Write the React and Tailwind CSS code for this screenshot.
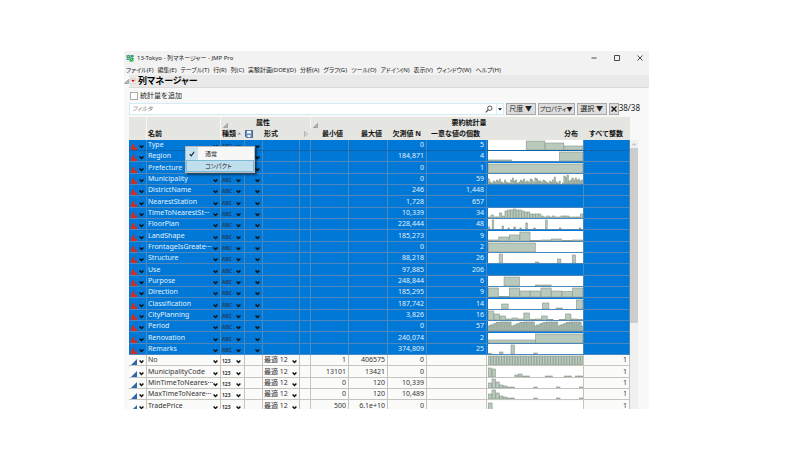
import React, { useState } from "react";

const menus = [
  "ファイル(F)",
  "編集(E)",
  "テーブル(T)",
  "行(R)",
  "列(C)",
  "実験計画(DOE)(D)",
  "分析(A)",
  "グラフ(G)",
  "ツール(O)",
  "アドイン(N)",
  "表示(V)",
  "ウィンドウ(W)",
  "ヘルプ(H)",
];

// puts single bars into an otherwise empty histogram
const sparse = (count, bars) => Array.from({ length: count }, (_, i) => bars[i] || 0);

const period = Array.from({ length: 57 }, (_, i) => Math.min(9, 5 + (i % 14) * 0.6 + (i % 2) * 0.4));

const columns = [
  { name: "Type", missing: "0", unique: "5", bars: [0, 0, 9, 7, 4] },
  { name: "Region", missing: "184,871", unique: "4", bars: [1, 0, 0, 9] },
  { name: "Prefecture", missing: "0", unique: "1", bars: [9] },
  {
    name: "Municipality",
    missing: "0",
    unique: "59",
    bars: [5, 2, 1, 3, 2, 4, 3, 5, 2, 1, 4, 2, 1, 1, 4, 6, 3, 4, 1, 2, 4, 3, 5, 2, 3, 2, 5, 4, 2, 6, 5, 3, 3, 2, 4, 3, 2, 1, 3, 2, 4, 7, 2, 1, 3, 0, 1, 8, 7, 9, 3, 4, 6, 4, 6, 4, 5, 3, 4],
  },
  { name: "DistrictName", missing: "246", unique: "1,448" },
  { name: "NearestStation", missing: "1,728", unique: "657" },
  {
    name: "TimeToNearestSt···",
    missing: "10,339",
    unique: "34",
    bars: [1, 3, 1, 1, 5, 2, 7, 8, 8, 9, 8, 8, 7, 6, 6, 4, 4, 4, 4, 2, 1, 2, 1, 2, 1, 1, 2, 2, 2, 1, 1, 1, 1, 4],
  },
  {
    name: "FloorPlan",
    missing: "228,444",
    unique: "48",
    bars: sparse(48, { 0: 2, 2: 9, 7: 3, 10: 1, 13: 2, 16: 1, 19: 6, 23: 1, 29: 9, 36: 1, 46: 1 }),
  },
  { name: "LandShape", missing: "185,273", unique: "9", bars: [1, 4, 6, 9, 0.5, 1, 2, 0.5, 1] },
  { name: "FrontageIsGreate···", missing: "0", unique: "2", bars: [9, 0] },
  { name: "Structure", missing: "88,218", unique: "26", bars: sparse(26, { 3: 9, 13: 1, 19: 4, 23: 8 }) },
  { name: "Use", missing: "97,885", unique: "206" },
  { name: "Purpose", missing: "248,844", unique: "6", bars: [0, 9, 0, 1, 0, 0] },
  { name: "Direction", missing: "185,295", unique: "9", bars: [9, 0.5, 9, 6, 6, 9, 6, 5.5, 9] },
  { name: "Classification", missing: "187,742", unique: "14", bars: sparse(14, { 2: 5, 8: 6, 10: 1, 13: 9 }) },
  {
    name: "CityPlanning",
    missing: "3,826",
    unique: "16",
    bars: [9, 6, 4, 1, 2, 1, 7, 0.5, 1, 4, 0.5, 0, 0.5, 6, 1, 0.5],
  },
  { name: "Period", missing: "0", unique: "57", bars: period },
  { name: "Renovation", missing: "240,074", unique: "2", bars: [3, 9] },
  { name: "Remarks", missing: "374,809", unique: "25", bars: sparse(25, { 0: 0.5, 3: 2, 6: 9, 12: 1 }) },
  { name: "No", numeric: true, min: "1", max: "406575", missing: "0", bars: Array(35).fill(9) },
  {
    name: "MunicipalityCode",
    numeric: true,
    min: "13101",
    max: "13421",
    missing: "0",
    bars: sparse(25, { 0: 9, 1: 8, 7: 2, 8: 3, 9: 1, 10: 1, 15: 1, 16: 1, 20: 1, 21: 1, 23: 1, 24: 1 }),
  },
  {
    name: "MinTimeToNeares···",
    numeric: true,
    min: "0",
    max: "120",
    missing: "10,339",
    bars: sparse(25, { 0: 5, 1: 9, 2: 6, 3: 3, 4: 2, 5: 1, 6: 1, 12: 1, 18: 1, 24: 1 }),
  },
  {
    name: "MaxTimeToNeare···",
    numeric: true,
    min: "0",
    max: "120",
    missing: "10,489",
    bars: sparse(25, { 0: 5, 1: 9, 2: 6, 3: 3, 4: 2, 5: 1, 6: 1, 12: 1, 18: 1, 24: 1 }),
  },
  { name: "TradePrice", numeric: true, min: "500", max: "6.1e+10", missing: "0", bars: sparse(22, { 0: 8 }) },
];

function Histogram({ bars, name }) {
  const width = 96 / bars.length;
  return (
    <svg viewBox="0 0 96 10" preserveAspectRatio="none" role="img" aria-label={`${name} 分布`} className="block h-[10px] w-full bg-white">
      {bars.map((h, i) =>
        h > 0 ? (
          <rect key={i} x={i * width + 0.2} y={10 - h} width={width - 0.4} height={h} fill="#b9c9bb" stroke="#84978a" strokeWidth="0.6" />
        ) : null
      )}
    </svg>
  );
}

function Chevron({ label }) {
  return (
    <button aria-label={label} className="mt-[4px] h-[5px] w-[5px] shrink-0">
      <svg viewBox="0 0 5 5" className="block h-full w-full">
        <path d="M0.6 1.4 L2.5 3.4 L4.4 1.4" fill="none" stroke="#111" strokeWidth="1.5" />
      </svg>
    </button>
  );
}

function TypeIcon({ numeric }) {
  return (
    <svg viewBox="0 0 6 6" className="mt-[4px] block h-[6px] w-[6px] shrink-0">
      {numeric ? <path d="M0 6 L6 0 V6 Z" fill="#2f66b0" /> : <path d="M0 6 V2.5 H1 V0.5 H3.5 V3.5 H6 V6 Z" fill="#d02c22" />}
    </svg>
  );
}

function Corner() {
  return (
    <svg viewBox="0 0 5 5" className="h-[5px] w-[5px] shrink-0">
      <path d="M0.5 4.5 H4.5 V0.5 Z" fill="#b5b5b5" stroke="#858585" strokeWidth="0.6" />
    </svg>
  );
}

function ColumnRow({ column, tall, focused }) {
  const { name, numeric, min, max, missing, unique, bars } = column;
  const line = numeric ? "border-[#c5c4be]" : "border-[#4c88bb]";
  const cell = `border-r border-b p-0 ${line} ${focused ? "border-b-[#1d4f80] [border-bottom-style:dotted]" : ""}`;
  const number = `${cell} pr-[2px] text-right`;
  return (
    <tr className={`${tall ? "h-3" : "h-[11px]"} ${numeric ? "bg-[#fbfbfa] text-[#333]" : "bg-[#0078d7] text-[#e4f1fc]"}`}>
      <td className={cell}>
        <div className="flex h-[10px] items-start justify-between pl-[2px] pr-[2px]">
          <TypeIcon numeric={numeric} />
          <Chevron label={`${name} のメニュー`} />
        </div>
      </td>
      <td className={cell}>
        <div className="flex h-[10px] items-start justify-between pl-[1px] pr-[2px]">
          <span className="min-w-0 whitespace-nowrap">{name}</span>
          <Chevron label={`${name} の設定`} />
        </div>
      </td>
      <td className={cell}>
        <div className="flex h-[10px] items-start justify-between pl-[1px] pr-[3px]">
          <span className={numeric ? "pt-[1px] text-[5px] font-bold" : "pt-[1px] text-[5px] font-bold text-[#1f3f60]"}>{numeric ? "123" : "ABC"}</span>
          <Chevron label={`${name} の種類`} />
        </div>
      </td>
      <td className={cell}>
        <div className="flex h-[10px] justify-end pr-[2px]">{!numeric && <Chevron label={`${name} の保存`} />}</div>
      </td>
      <td className={cell}>
        {numeric && (
          <div className="flex h-[10px] items-start justify-between pl-[1px] pr-[2px]">
            <span className="whitespace-nowrap">最適 12</span>
            <Chevron label={`${name} の形式`} />
          </div>
        )}
      </td>
      <td className={cell}></td>
      <td className={number}>{min}</td>
      <td className={number}>{max}</td>
      <td className={number}>{missing}</td>
      <td className={number}>{unique}</td>
      <td className={`${cell} pl-[1px]`}>{bars && <Histogram bars={bars} name={name} />}</td>
      <td className={number}>{numeric && "1"}</td>
    </tr>
  );
}

function ContextMenu() {
  return (
    <div role="menu" className="absolute top-[29px] left-[61px] w-[70px] border border-[#b9b9b9] bg-[#f7f7f7] text-[6px] leading-[10px] text-[#222] shadow-[2px_2px_2px_rgba(0,0,0,0.5)]">
      <button role="menuitemradio" aria-checked="true" className="flex h-[13px] w-full items-center">
        <span className="flex h-full w-[12px] items-center justify-center bg-[#c7e3f2]">
          <svg viewBox="0 0 8 8" className="h-[6px] w-[6px]">
            <path d="M1 4 L3 6.5 L7 1" fill="none" stroke="#111" strokeWidth="1.4" />
          </svg>
        </span>
        <span className="pl-[7px]">通常</span>
      </button>
      <button role="menuitemradio" aria-checked="false" className="flex h-[12px] w-full items-center border border-[#7dbbd8] bg-[#bfdfee] pl-[18px] [font-feature-settings:'palt']">
        コンパクト
      </button>
    </div>
  );
}

export default function App() {
  const [filter, setFilter] = useState("");
  const [addStats, setAddStats] = useState(false);
  const th = "border-b border-[#e5e5e2] p-0 font-bold whitespace-nowrap";
  const button = "flex h-[12px] items-center justify-center border border-[#a8a8a8] bg-[#dddddd] whitespace-nowrap";

  return (
    <div className="h-screen bg-white pt-[51px] pr-[151px] pb-[41px] pl-[124px] font-['Noto_Sans','Noto_Sans_CJK_JP',sans-serif] text-[7px] leading-[10px] text-[#222]">
      <div className="flex h-full flex-col overflow-hidden bg-[#f8f8f8]">
        <header className="bg-[#f2f2f2] text-[6px]">
          <div className="flex h-[13px] items-center pl-[2px]">
            <svg viewBox="0 0 8 8" className="h-[8px] w-[8px]">
              <path d="M0.5 1 H4.5 V4 H0.5 Z" fill="#3aa655" />
              <path d="M3.5 3.5 H7.5 V7.5 H3.5 Z" fill="#1fae3f" />
              <path d="M0.5 4.5 H3 V6 H0.5 Z M5 1 H7.5 V3 H5 Z" fill="#3f7fc4" />
              <path d="M1.5 2 L3 3 M4.5 4.5 L6.5 6.5" stroke="#fff" strokeWidth="0.6" />
            </svg>
            <h1 className="pl-[3px] whitespace-nowrap [font-feature-settings:'palt']">13-Tokyo - 列マネージャー - JMP Pro</h1>
            <div className="ml-auto flex items-center gap-[17px] pr-[6px]">
              {[
                ["最小化", "M0.5 3 H5.5"],
                ["最大化", "M0.5 0.5 H5.5 V5.5 H0.5 Z"],
                ["閉じる", "M0.5 0.5 L5.5 5.5 M5.5 0.5 L0.5 5.5"],
              ].map(([label, d]) => (
                <button key={label} aria-label={label} className="h-[6px] w-[6px]">
                  <svg viewBox="0 0 6 6" className="block h-full w-full">
                    <path d={d} fill="none" stroke="#222" strokeWidth="0.8" />
                  </svg>
                </button>
              ))}
            </div>
          </div>
          <nav className="flex h-[11px] items-center gap-1 pl-[2px] [font-feature-settings:'palt']">
            {menus.map((menu) => (
              <button key={menu} className="whitespace-nowrap">{menu}</button>
            ))}
          </nav>
        </header>

        <div className="flex h-[13px] shrink-0 items-center">
          <Corner />
          <div className="flex h-full flex-1 items-center border-b border-[#dadada] bg-[#e9e9e9] pl-[1px]">
            <button aria-label="列マネージャーのメニュー" className="h-[6px] w-[6px] border border-[#d8d8d8] bg-white">
              <svg viewBox="0 0 4 4" className="block h-full w-full">
                <path d="M0 0.8 H4 L2 3.4 Z" fill="#d21f1f" />
              </svg>
            </button>
            <h2 className="pl-[2px] text-[9px] font-bold text-black [font-feature-settings:'palt']">列マネージャー</h2>
          </div>
        </div>

        <label className="flex h-[15px] shrink-0 items-center gap-[2px] pl-[6px]">
          <input
            type="checkbox"
            checked={addStats}
            onChange={(e) => setAddStats(e.target.checked)}
            className="h-[8px] w-[8px] appearance-none border border-[#aaa] bg-white checked:bg-[#0078d7]"
          />
          統計量を追加
        </label>

        <div className="flex h-[12px] shrink-0 items-center gap-[2px] pr-[9px] pl-[5px]">
          <div className="flex h-full flex-1 items-center border border-[#d3ecf7] bg-white">
            <input
              type="text"
              aria-label="フィルタ"
              placeholder="フィルタ"
              value={filter}
              onChange={(e) => setFilter(e.target.value)}
              className="h-full min-w-0 flex-1 pl-[2px] text-[6px] italic outline-none placeholder:text-[#777] [font-feature-settings:'palt']"
            />
            <svg viewBox="0 0 8 8" className="mr-[3px] h-[8px] w-[8px]">
              <circle cx="4.8" cy="3.2" r="2.2" fill="none" stroke="#444" strokeWidth="0.9" />
              <path d="M3.2 4.8 L0.8 7.3" stroke="#444" strokeWidth="1.1" />
            </svg>
            <button aria-label="検索オプション" className="flex h-full w-[7px] items-center justify-center border-l border-[#d3ecf7]">
              <svg viewBox="0 0 4 3" className="h-[3px] w-[4px]">
                <path d="M0 0.3 H4 L2 2.6 Z" fill="#111" />
              </svg>
            </button>
          </div>
          <button className={`${button} w-[30px]`}>尺度 ▼</button>
          <button className={`${button} w-[37px] text-[6px] [font-feature-settings:'palt']`}>プロパティ▼</button>
          <button className={`${button} w-[30px]`}>選択 ▼</button>
          <div className="flex items-center">
            <button aria-label="クリア" className={`${button} w-[10px]`}>
              <svg viewBox="0 0 6 6" className="h-[6px] w-[6px]">
                <path d="M0.5 0.5 L5.5 5.5 M5.5 0.5 L0.5 5.5" stroke="#111" strokeWidth="1.3" />
              </svg>
            </button>
            <span className="pb-[2px] text-[8px]">38/38</span>
          </div>
        </div>

        <div className="relative mt-[2px] flex min-h-0 flex-1 overflow-hidden pr-[11px] pl-[5px]">
          <table className="w-full table-fixed border-separate border-spacing-0 self-start">
            <colgroup>
              <col className="w-[18px]" />
              <col className="w-[74px]" />
              <col className="w-[24px]" />
              <col className="w-[18px]" />
              <col className="w-[37px]" />
              <col className="w-[11px]" />
              <col className="w-[38px]" />
              <col className="w-[39px]" />
              <col className="w-[39px]" />
              <col className="w-[60px]" />
              <col className="w-[97px]" />
              <col className="w-[46px]" />
            </colgroup>
            <thead className="bg-[#e5e5e2] text-[#111]">
              <tr className="h-[11px]">
                <th className="border-r border-[#f8f8f8] p-0"></th>
                <th className="border-r border-[#f8f8f8] p-0"></th>
                <th colSpan={4} className="border-r border-[#f8f8f8] p-0">
                  <div className="flex h-[10px] items-end pl-[2px]">
                    <Corner />
                    <span className="flex-1 pr-[12px] leading-[10px]">属性</span>
                  </div>
                </th>
                <th colSpan={6} className="p-0">
                  <div className="flex h-[10px] items-end pl-[2px]">
                    <Corner />
                    <span className="flex-1 pr-[10px] leading-[10px]">要約統計量</span>
                  </div>
                </th>
              </tr>
              <tr className="h-[12px]">
                <th className={`${th} border-r border-r-[#f8f8f8]`}></th>
                <th className={`${th} border-r border-r-[#f8f8f8] pl-[1px] text-left`}>名前</th>
                <th className={`${th} pl-[1px] text-left`}>
                  種類 <span className="text-[5px] font-normal">^</span>
                </th>
                <th className={th}>
                  <svg viewBox="0 0 8 8" className="h-[8px] w-[8px]">
                    <path d="M0.5 0.5 H7.5 V7.5 H1.5 L0.5 6.5 Z" fill="#6f8fb8" stroke="#2d4f80" strokeWidth="0.8" />
                    <path d="M2 0.8 H6 V3.5 H2 Z M2.5 5 H5.5 V7.2 H2.5 Z" fill="#eef3fa" />
                  </svg>
                </th>
                <th className={`${th} pl-[1px] text-left`}>形式</th>
                <th className={th}>
                  <svg viewBox="0 0 4 6" className="mx-auto h-[6px] w-[4px]">
                    <path d="M0.5 0.5 L3.5 3 L0.5 5.5 Z" fill="#ddd" stroke="#999" strokeWidth="0.6" />
                  </svg>
                </th>
                <th className={`${th} pr-[6px] text-right`}>最小値</th>
                <th className={`${th} pr-[6px] text-right`}>最大値</th>
                <th className={`${th} pr-[6px] text-right`}>欠測値 N</th>
                <th className={`${th} pr-[7px] text-right`}>一意な値の個数</th>
                <th className={`${th} pr-[6px] text-right`}>分布</th>
                <th className={`${th} pr-[7px] text-right`}>すべて整数</th>
              </tr>
            </thead>
            <tbody>
              {columns.map((column, i) => (
                <ColumnRow key={column.name} column={column} tall={i % 3 === 2} focused={i === 0} />
              ))}
            </tbody>
          </table>
          <div className="mt-[23px] flex w-[8px] shrink-0 flex-col bg-[#f0f0f0]">
            <button aria-label="上へスクロール" className="flex h-[8px] items-center justify-center">
              <svg viewBox="0 0 4 3" className="h-[3px] w-[4px]">
                <path d="M0.3 2.5 L2 0.6 L3.7 2.5" fill="none" stroke="#888" strokeWidth="0.7" />
              </svg>
            </button>
            <div className="h-[65%] bg-[#cdcdcd]"></div>
          </div>
          <ContextMenu />
        </div>
      </div>
    </div>
  );
}
